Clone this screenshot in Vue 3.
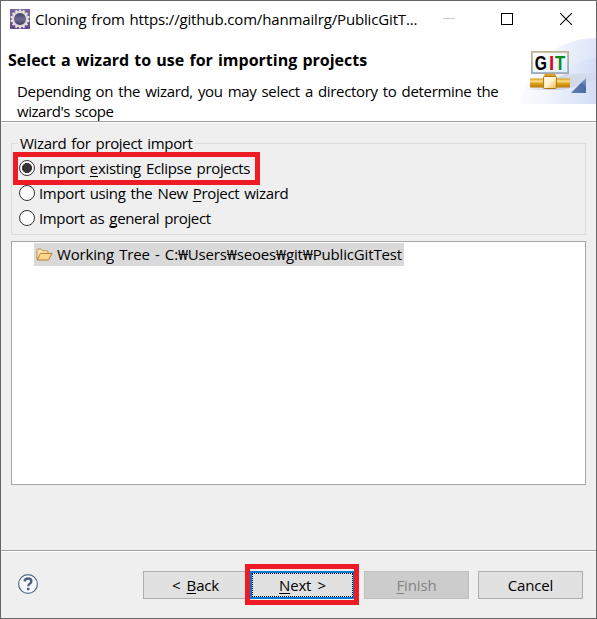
<script setup>
import { ref } from 'vue'

const selected = ref(0)
const options = [
  { before: 'Import ', key: 'e', after: 'xisting Eclipse projects', cls: 'opt-a' },
  { before: 'Import using the New ', key: 'P', after: 'roject wizard', cls: 'opt-b' },
  { before: 'Import as ', key: 'g', after: 'eneral project', cls: 'opt-c' },
]
const teeth = Array.from({ length: 14 }, (_, i) => (i * 360) / 14)
</script>

<template>
  <div class="window">
    <header class="titlebar">
      <svg class="app-icon" width="20" height="20" viewBox="0 0 20 20">
        <defs>
          <linearGradient id="appBg" x1="0" y1="0" x2="0" y2="1">
            <stop offset="0" stop-color="#79659f" />
            <stop offset="1" stop-color="#5f4590" />
          </linearGradient>
          <linearGradient id="appCore" x1="0" y1="0" x2="0" y2="1">
            <stop offset="0" stop-color="#3c3655" />
            <stop offset="0.5" stop-color="#6e6c92" />
            <stop offset="1" stop-color="#3a3456" />
          </linearGradient>
        </defs>
        <rect width="20" height="20" fill="url(#appBg)" />
        <rect v-for="a in teeth" :key="a" x="8.9" y="0.4" width="2.2" height="3" fill="#e4e1dc" :transform="`rotate(${a} 10 10)`" />
        <circle cx="10" cy="10" r="7.2" fill="url(#appCore)" stroke="#dedbd6" stroke-width="2.3" />
      </svg>
      <span class="title">Cloning from https://github.com/hanmailrg/PublicGitT...</span>
      <div class="controls">
        <svg width="11" height="12" viewBox="0 0 11 12" overflow="visible"><path d="M0 5.5H12" stroke="#ccc" /></svg>
        <svg width="12" height="12" viewBox="0 0 12 12"><rect x=".5" y=".5" width="11" height="11" fill="none" stroke="#000" /></svg>
        <svg width="12" height="12" viewBox="0 0 12 12"><path d="M0 0L12 12M12 0L0 12" stroke="#000" stroke-width="1.1" /></svg>
      </div>
    </header>

    <section class="banner">
      <div class="intro">
        <h1>Select a wizard to use for importing projects</h1>
        <p><span class="d1">Depending on the wizard, you may select a directory to determine the</span><br /><span class="d2">wizard's scope</span></p>
      </div>
      <svg class="git-art" width="75" height="67" viewBox="0 0 75 67">
        <defs>
          <linearGradient id="arc1" x1="0" y1="0.3" x2="1" y2="0.5">
            <stop offset="0" stop-color="#fff" />
            <stop offset="0.5" stop-color="#eef2fc" />
            <stop offset="1" stop-color="#dae3f7" />
          </linearGradient>
          <linearGradient id="arc2" x1="0" y1="0" x2="1" y2="0">
            <stop offset="0" stop-color="#f8faff" />
            <stop offset="1" stop-color="#cedaf5" />
          </linearGradient>
          <linearGradient id="shade" x1="0" y1="0" x2="1" y2="0">
            <stop offset="0" stop-color="#c9ccd5" stop-opacity="0" />
            <stop offset="0.35" stop-color="#c5c8d0" stop-opacity="0.7" />
            <stop offset="1" stop-color="#cfd6e8" stop-opacity="0.5" />
          </linearGradient>
          <linearGradient id="gold" x1="0" y1="0" x2="0" y2="1">
            <stop offset="0" stop-color="#d59a16" />
            <stop offset="0.3" stop-color="#ffe08a" />
            <stop offset="0.55" stop-color="#dda21e" />
            <stop offset="1" stop-color="#b97806" />
          </linearGradient>
          <linearGradient id="hub" x1="0" y1="0" x2="1" y2="1">
            <stop offset="0" stop-color="#fffef4" />
            <stop offset="0.5" stop-color="#fff3cd" />
            <stop offset="1" stop-color="#e9b445" />
          </linearGradient>
          <linearGradient id="panel" x1="0" y1="0" x2="1" y2="1">
            <stop offset="0" stop-color="#fff" />
            <stop offset="1" stop-color="#dcedf9" />
          </linearGradient>
          <linearGradient id="frame" x1="0" y1="0" x2="0" y2="1">
            <stop offset="0" stop-color="#bdb497" />
            <stop offset="1" stop-color="#9ba9b8" />
          </linearGradient>
          <linearGradient id="tri" x1="0" y1="1" x2="1" y2="0">
            <stop offset="0" stop-color="#89a3cf" />
            <stop offset="0.6" stop-color="#4869a5" />
            <stop offset="1" stop-color="#8ba5d2" />
          </linearGradient>
        </defs>
        <path d="M0 67C3 34 31 1 75 1V67Z" fill="url(#arc1)" />
        <path d="M18 67C27 42 47 24 75 21V67Z" fill="url(#arc2)" opacity=".65" />
        <path d="M3 53L45 37L75 36V43L43 53Z" fill="url(#shade)" />
        <rect x="10.9" y="14.9" width="36.2" height="21.2" fill="url(#panel)" stroke="url(#frame)" stroke-width="1.8" />
        <g class="git">
          <text transform="translate(13.8 32.6) scale(.78 1)">G</text>
          <text transform="translate(27.9 32.6) scale(.95 1)" fill="#d3101b">I</text>
          <text transform="translate(34 32.6) scale(.83 1)" fill="#078a16">T</text>
        </g>
        <rect x="9" y="41.5" width="40" height="9" fill="url(#gold)" />
        <path d="M24 36.8h10l1.5 3h-13z" fill="#d9a11c" />
        <rect x="22.6" y="39.5" width="12.8" height="12" rx=".8" fill="url(#hub)" stroke="#ae7411" />
        <path d="M65 41V56H50Z" fill="url(#tri)" />
        <path d="M65 56H50L56 50V55L58 48L59 54L61 52L65 56" fill="#3f5f9b" opacity=".5" />
      </svg>
    </section>

    <main class="content">
      <fieldset class="group">
        <legend>Wizard for project import</legend>
        <div v-for="(o, i) in options" :key="i" class="option" @click="selected = i">
          <span class="radio" :class="{ on: selected === i }"></span>
          <span class="label" :class="o.cls">{{ o.before }}<u>{{ o.key }}</u>{{ o.after }}</span>
          <span v-if="i === 0" class="mark mark-option"></span>
        </div>
      </fieldset>

      <div class="tree">
        <div class="tree-row">
          <svg width="17" height="13" viewBox="0 0 17 13">
            <path d="M1 11.5V2.2Q1 1 2.2 1H5l1.5 1.8H11Q12 2.8 12 4v1.4" fill="#fbe7b8" stroke="#c98b35" />
            <path d="M1.2 12L4.4 5.4H16L12.4 12Z" fill="#fbd68c" stroke="#bd7d2c" stroke-linejoin="round" />
          </svg>
          <span class="path">Working Tree - C:₩Users₩seoes₩git₩PublicGitTest</span>
        </div>
      </div>
    </main>

    <footer class="footer">
      <svg class="help" width="22" height="22" viewBox="0 0 22 22">
        <circle cx="11" cy="11" r="9.4" fill="#f7f8fa" stroke="#566a88" stroke-width="1.2" />
        <path d="M7.6 8.5Q7.8 5.5 11.1 5.5Q14.4 5.5 14.4 8.2Q14.4 9.7 12.7 10.7Q11.3 11.5 11.3 13.2" fill="none" stroke="#4b607f" stroke-width="2.3" />
        <rect x="9.9" y="14.8" width="2.6" height="2.4" rx=".6" fill="#4b607f" />
      </svg>
      <div class="buttons">
        <button class="btn back"><span>&lt; <u>B</u>ack</span></button>
        <button class="btn next"><span><u>N</u>ext &gt;</span><i class="mark mark-next"></i></button>
        <button class="btn finish" disabled><span><u>F</u>inish</span></button>
        <button class="btn cancel"><span>Cancel</span></button>
      </div>
    </footer>
  </div>
</template>

<style>
body { margin: 0; background: #efefef; }
</style>

<style scoped>
.window {
  box-sizing: border-box;
  width: 597px;
  height: 619px;
  border: 1px solid #666;
  display: flex;
  flex-direction: column;
  background: #efefef;
  color: #000;
  font: 15px/20px "Open Sans", "Noto Sans", "Noto Sans CJK KR", sans-serif;
  white-space: nowrap;
  overflow: hidden;
}
.titlebar {
  height: 36px;
  flex: none;
  display: flex;
  align-items: center;
  background: #fff;
  padding-left: 9px;
}
.app-icon { flex: none; }
.title { margin-left: 5px; flex: 1; letter-spacing: -.15px; word-spacing: 1px; }
.controls { display: flex; gap: 47px; padding-right: 24px; }
.controls svg { display: block; }
.banner {
  height: 84px;
  flex: none;
  display: flex;
  justify-content: space-between;
  align-items: flex-start;
  background: #fff;
  border-bottom: 1px solid #a0a0a0;
  box-shadow: 0 1px #fff;
}
.intro { padding: 12px 0 0 7px; }
h1 { margin: 0; font-size: 16px; line-height: 22px; font-weight: 700; word-spacing: 1px; }
p { margin: 10px 0 0 9px; line-height: 20px; word-spacing: 1.5px; }
.d1 { letter-spacing: -.33px; }
.d2 { letter-spacing: -.45px; }
.git-art { flex: none; }
.git { font: 700 20px "Liberation Sans", sans-serif; }
.content { flex: 1; padding: 11px 10px 0; }
.group {
  margin: 0;
  padding: 0 0 0 7px;
  min-width: 0;
  height: 102px;
  box-sizing: border-box;
  border: 1px solid #dcdcdc;
}
legend { padding: 0 2px; line-height: 20px; height: 20px; margin-left: -1px; word-spacing: 1.5px; letter-spacing: -.34px; }
.option { position: relative; display: flex; align-items: center; gap: 4px; height: 25px; }
.group .option:nth-of-type(1) { margin-top: 3px; }
.label { margin-top: -2px; word-spacing: 1.5px; }
.opt-a { letter-spacing: -.33px; }
.opt-b { letter-spacing: -.35px; }
.opt-c { letter-spacing: -.37px; }
u { text-decoration: underline; text-underline-offset: 2px; text-decoration-thickness: 1px; text-decoration-skip-ink: none; }
.radio {
  box-sizing: border-box;
  width: 16px;
  height: 16px;
  margin-top: -1px;
  border: 1px solid #333;
  border-radius: 50%;
  background: #fff;
}
.radio.on { background: radial-gradient(circle, #333 0 4.7px, #fff 5.3px); }
.mark { position: absolute; box-sizing: border-box; border: 5px solid #ed1c24; pointer-events: none; }
.mark-option { left: -6px; top: -4px; width: 247px; height: 33px; }
.tree {
  margin-top: 6px;
  box-sizing: border-box;
  height: 244px;
  border: 1px solid #a5a6ac;
  background: #fff;
  padding: 1px 0 0 22px;
}
.tree-row {
  display: flex;
  align-items: center;
  box-sizing: border-box;
  width: 370px;
  height: 23px;
  padding-left: 2px;
  gap: 4px;
  background: #d9d9d9;
}
.path { margin-top: -2px; letter-spacing: -.16px; word-spacing: 1.5px; }
.footer {
  height: 68px;
  flex: none;
  box-sizing: border-box;
  border-top: 1px solid #a0a0a0;
  box-shadow: inset 0 1px #fff;
  display: flex;
  justify-content: space-between;
  align-items: flex-start;
  padding: 20px 13px 0 16px;
}
.help { margin-top: 2px; }
.buttons { display: flex; }
.btn {
  position: relative;
  box-sizing: border-box;
  width: 105px;
  height: 28px;
  padding: 0;
  border: 1px solid #adadad;
  background: #e1e1e1;
  font: inherit;
  color: #000;
  letter-spacing: -.15px;
  word-spacing: 2.5px;
}
.next { margin-left: 2px; border: 2px solid #0078d7; outline: 1px dotted #000; outline-offset: -3px; }
.mark-next { left: -7px; top: -9px; width: 114px; height: 41px; }
.finish { margin-left: 9px; background: #ccc; border-color: #bfbfbf; color: #838383; }
.cancel { margin-left: 9px; }
</style>
